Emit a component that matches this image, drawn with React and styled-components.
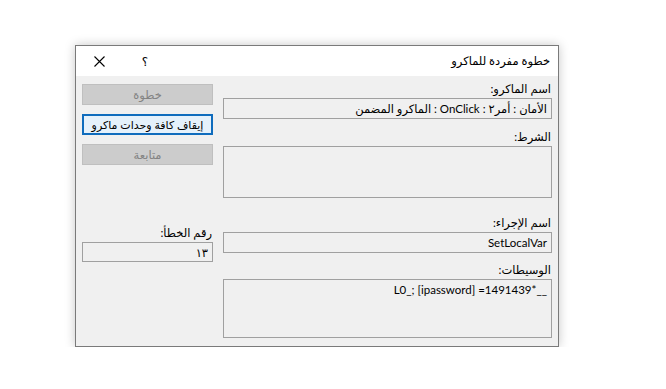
import styled, { createGlobalStyle } from 'styled-components';

const GlobalStyle = createGlobalStyle`
  html, body {
    margin: 0;
    padding: 0;
    background: #ffffff;
  }
  body {
    font-family: "Lato", "DejaVu Sans", sans-serif;
    font-size: 11.5px;
    color: #000;
  }
`;

const Dialog = styled.div`
  box-sizing: border-box;
  width: 484px;
  height: 302px;
  margin: 45px 0 0 75px;
  border: 1px solid #7a7a7a;
  background: #f0f0f0;
  box-shadow: 0 0 10px rgba(0, 0, 0, 0.22);
  display: flex;
  flex-direction: column;
  direction: rtl;
`;

const TitleBar = styled.div`
  height: 30px;
  background: #ffffff;
  display: flex;
  align-items: center;
  flex-shrink: 0;
`;

const Title = styled.div`
  padding-right: 8px;
  flex: 1;
`;

const CaptionButton = styled.div`
  width: 46px;
  height: 30px;
  display: flex;
  align-items: center;
  justify-content: center;
  font-size: 12px;
`;

const Body = styled.div`
  flex: 1;
  display: flex;
  gap: 10px;
  padding: 5px 6px 0 6px;
`;

const FieldsColumn = styled.div`
  width: 329px;
  display: flex;
  flex-direction: column;
`;

const SideColumn = styled.div`
  width: 131px;
  display: flex;
  flex-direction: column;
  padding-top: 3px;
`;

const Field = styled.div`
  display: flex;
  flex-direction: column;
  margin-top: ${p => p.$top || 0}px;
`;

const Label = styled.div`
  height: 17px;
  line-height: 15px;
  padding-right: 1px;
`;

const Box = styled.div`
  box-sizing: border-box;
  height: ${p => p.$h}px;
  border: 1px solid #a0a0a0;
  background: #f0f0f0;
  padding: 1px 4px 0 4px;
  line-height: 17px;
  white-space: nowrap;
  overflow: hidden;
`;

const Ltr = styled.span`
  direction: ltr;
  unicode-bidi: isolate;
`;

const Button = styled.div`
  box-sizing: border-box;
  height: 21px;
  margin-bottom: ${p => p.$gap || 0}px;
  display: flex;
  align-items: center;
  justify-content: center;
  font-size: ${p => (p.$primary ? 11 : 11.5)}px;
  white-space: nowrap;
  background: ${p => (p.$primary ? '#e5f1fb' : '#cccccc')};
  border: ${p => (p.$primary ? '2px solid #0f6cbd' : '1px solid #bfbfbf')};
  color: ${p => (p.$primary ? '#000' : '#838383')};
`;

const CloseIcon = () => (
  <svg width="11" height="11" viewBox="0 0 11 11">
    <path d="M0.5 0.5 L10.5 10.5 M10.5 0.5 L0.5 10.5" stroke="#000" strokeWidth="1.1" fill="none" />
  </svg>
);

export default function App() {
  return (
    <>
      <GlobalStyle />
      <Dialog>
        <TitleBar>
          <Title>خطوة مفردة للماكرو</Title>
          <CaptionButton>؟</CaptionButton>
          <CaptionButton>
            <CloseIcon />
          </CaptionButton>
        </TitleBar>
        <Body>
          <FieldsColumn>
            <Field>
              <Label>اسم الماكرو:</Label>
              <Box $h={21}>الأمان : أمر٢ : OnClick : الماكرو المضمن</Box>
            </Field>
            <Field $top={10}>
              <Label>الشرط:</Label>
              <Box $h={52} />
            </Field>
            <Field $top={17}>
              <Label>اسم الإجراء:</Label>
              <Box $h={21}>SetLocalVar</Box>
            </Field>
            <Field $top={9}>
              <Label>الوسيطات:</Label>
              <Box $h={59}>
                <Ltr>L0_; [ipassword] =1491439*__</Ltr>
              </Box>
            </Field>
          </FieldsColumn>
          <SideColumn>
            <Button $gap={9}>خطوة</Button>
            <Button $gap={9} $primary>إيقاف كافة وحدات ماكرو</Button>
            <Button>متابعة</Button>
            <Field $top={60}>
              <Label>رقم الخطأ:</Label>
              <Box $h={20}>١٣</Box>
            </Field>
          </SideColumn>
        </Body>
      </Dialog>
    </>
  );
}
